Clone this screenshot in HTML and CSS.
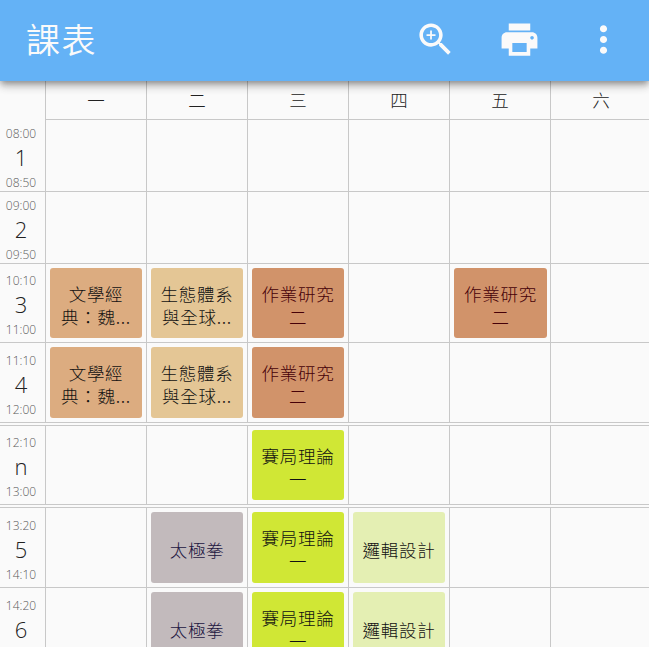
FILE: index.html
```html
<!DOCTYPE html>
<html lang="zh-Hant">
<head>
<meta charset="utf-8">
<title>課表</title>
<link rel="stylesheet" href="styles.css">
</head>
<body>
<header class="bar">
  <h1 class="title">課表</h1>
  <div class="actions">
    <svg class="icon" viewBox="0 0 24 24"><path d="M15.5 14h-.79l-.28-.27C15.41 12.59 16 11.11 16 9.5 16 5.91 13.09 3 9.5 3S3 5.91 3 9.5 5.91 16 9.5 16c1.61 0 3.09-.59 4.23-1.57l.27.28v.79l5 4.99L20.49 19l-4.99-5zm-6 0C7.01 14 5 11.99 5 9.5S7.01 5 9.5 5 14 7.01 14 9.5 11.99 14 9.5 14zm2.5-4h-2v2H9v-2H7V9h2V7h1v2h2v1z"/></svg>
    <svg class="icon" viewBox="0 0 24 24"><path d="M19 8H5c-1.66 0-3 1.34-3 3v6h4v4h12v-4h4v-6c0-1.66-1.34-3-3-3zm-3 11H8v-5h8v5zm3-7c-.55 0-1-.45-1-1s.45-1 1-1 1 .45 1 1-.45 1-1 1zm-1-9H6v4h12V3z"/></svg>
    <svg class="icon" viewBox="0 0 24 24"><path d="M12 8c1.100 0 2-.9 2-2s-.9-2-2-2-2 .9-2 2 .9 2 2 2zm0 2c-1.100 0-2 .9-2 2s.9 2 2 2 2-.9 2-2-.9-2-2-2zm0 6c-1.100 0-2 .9-2 2s.9 2 2 2 2-.9 2-2-.9-2-2-2z"/></svg>
  </div>
</header>
<main class="table">
  <div class="row head">
    <div class="corner"></div>
    <div class="cell">一</div><div class="cell">二</div><div class="cell">三</div><div class="cell">四</div><div class="cell">五</div><div class="cell">六</div>
  </div>
  <div class="row short">
    <div class="time"><span>08:00</span><b>1</b><span>08:50</span></div>
    <div class="cell"></div><div class="cell"></div><div class="cell"></div><div class="cell"></div><div class="cell"></div><div class="cell"></div>
  </div>
  <div class="row short">
    <div class="time"><span>09:00</span><b>2</b><span>09:50</span></div>
    <div class="cell"></div><div class="cell"></div><div class="cell"></div><div class="cell"></div><div class="cell"></div><div class="cell"></div>
  </div>
  <div class="row medium">
    <div class="time"><span>10:10</span><b>3</b><span>11:00</span></div>
    <div class="cell"><div class="card lit">文學經<br>典：魏...</div></div>
    <div class="cell"><div class="card eco">生態體系<br>與全球...</div></div>
    <div class="cell"><div class="card ops">作業研究<br>二</div></div>
    <div class="cell"></div>
    <div class="cell"><div class="card ops wide">作業研究<br>二</div></div>
    <div class="cell"></div>
  </div>
  <div class="row">
    <div class="time"><span>11:10</span><b>4</b><span>12:00</span></div>
    <div class="cell"><div class="card lit">文學經<br>典：魏...</div></div>
    <div class="cell"><div class="card eco">生態體系<br>與全球...</div></div>
    <div class="cell"><div class="card ops">作業研究<br>二</div></div>
    <div class="cell"></div><div class="cell"></div><div class="cell"></div>
  </div>
  <div class="row medium split">
    <div class="time"><span>12:10</span><b>n</b><span>13:00</span></div>
    <div class="cell"></div><div class="cell"></div>
    <div class="cell"><div class="card game">賽局理論<br>一</div></div>
    <div class="cell"></div><div class="cell"></div><div class="cell"></div>
  </div>
  <div class="row split">
    <div class="time"><span>13:20</span><b>5</b><span>14:10</span></div>
    <div class="cell"></div>
    <div class="cell"><div class="card taichi">太極拳</div></div>
    <div class="cell"><div class="card game">賽局理論<br>一</div></div>
    <div class="cell"><div class="card logic">邏輯設計</div></div>
    <div class="cell"></div><div class="cell"></div>
  </div>
  <div class="row">
    <div class="time"><span>14:20</span><b>6</b><span></span></div>
    <div class="cell"></div>
    <div class="cell"><div class="card taichi">太極拳</div></div>
    <div class="cell"><div class="card game">賽局理論<br>一</div></div>
    <div class="cell"><div class="card logic">邏輯設計</div></div>
    <div class="cell"></div><div class="cell"></div>
  </div>
</main>
</body>
</html>
```
FILE: styles.css
```css
* { box-sizing: border-box; }
body {
  margin: 0;
  height: 647px;
  overflow: hidden;
  display: flex;
  flex-direction: column;
  background: #fafafa;
  color: #212121;
  font-family: "Open Sans", "Noto Sans CJK TC", sans-serif;
  font-weight: 300;
}
.bar {
  flex: none;
  position: relative;
  z-index: 1;
  height: 81px;
  padding: 0 24px 0 26px;
  display: flex;
  align-items: center;
  justify-content: space-between;
  background: #64b2f6;
  color: #fafafa;
  box-shadow: 0 3px 6px -1px rgba(0,0,0,.3), 0 6px 8px rgba(0,0,0,.14), 0 2px 12px rgba(0,0,0,.12);
}
.title {
  margin: 0;
  padding-bottom: 4px;
  font-family: "Noto Sans CJK TC", sans-serif;
  font-size: 34px;
  line-height: 48px;
  font-weight: 350;
  letter-spacing: 1.5px;
}
.actions { display: flex; gap: 41px; padding-bottom: 3px; }
.icon { width: 43px; height: 43px; fill: #fafafa; }
.table { flex: none; width: 651px; }
.row {
  display: grid;
  grid-template-columns: 45px repeat(6, 101px);
  height: 80px;
  border-bottom: 1px solid #c8c8c8;
}
.short { height: 72px; }
.medium { height: 79px; }
.split { margin-top: 2px; border-top: 1px solid #c8c8c8; height: 81px; }
.medium.split { height: 80px; }
.head { height: 39px; border: 0; }
.head .cell {
  display: flex;
  align-items: center;
  justify-content: center;
  border-bottom: 1px solid #c8c8c8;
  font-family: "Noto Sans CJK TC", sans-serif;
  font-size: 17.5px;
  padding: 0 0 2px;
}
.cell { border-left: 1px solid #c8c8c8; padding: 4px; }
.time {
  display: flex;
  flex-direction: column;
  align-items: center;
  justify-content: center;
  padding: 5px 3px 0 0;
}
.time span { height: 16px; font-size: 12px; line-height: 16px; color: #5a5a5a; }
.time b { margin-top: -1px; font-size: 22px; line-height: 33px; padding-bottom: 1px; font-weight: 300; }
.card {
  width: 92px;
  height: 100%;
  padding-top: 3px;
  display: flex;
  align-items: center;
  justify-content: center;
  text-align: center;
  border-radius: 3px;
  font-family: "Noto Sans CJK TC", sans-serif;
  font-size: 17.5px;
  line-height: 23px;
  letter-spacing: .7px;
  white-space: nowrap;
}
.wide { width: 93px; }
.lit { background: #dcac80; color: #111; }
.eco { background: #e4c695; color: #111; }
.ops { background: #d1936a; color: #450008; }
.game { background: #d0e735; color: #111; }
.taichi { background: #c2babc; color: #1c1540; }
.logic { background: #e4efb3; color: #111; }
```
